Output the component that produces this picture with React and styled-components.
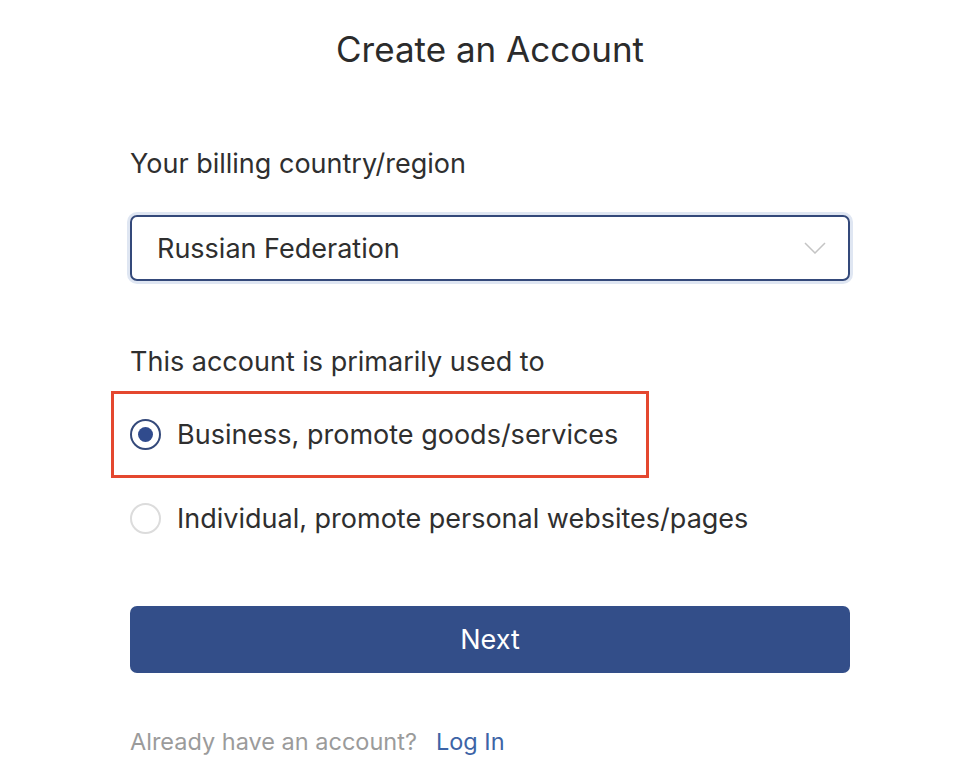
import React from "react";
import styled, { createGlobalStyle } from "styled-components";

const Global = createGlobalStyle`
  html, body { margin: 0; padding: 0; background: #ffffff; }
  body { font-family: Inter, "Noto Sans", sans-serif; color: #2f2f2f; }
  * { box-sizing: border-box; }
`;

const Page = styled.div`
  width: 974px;
  height: 778px;
  padding: 0 124px 0 130px;
  display: flex;
  flex-direction: column;
  overflow: hidden;
`;

const Title = styled.h1`
  margin: 27px 0 0;
  font-size: 35px;
  font-weight: 400;
  line-height: 44px;
  text-align: center;
  color: #2b2b2b;
`;

const Label = styled.div`
  margin-top: ${(p) => p.$top}px;
  font-size: 27px;
  line-height: 30px;
  color: #2f2f2f;
`;

const Select = styled.div`
  margin-top: 36px;
  height: 66px;
  border: 2px solid #34497a;
  border-radius: 7px;
  box-shadow: 0 0 0 3px #dfe6f2;
  display: flex;
  align-items: center;
  justify-content: space-between;
  padding: 0 22px 0 25px;
  font-size: 27px;
  color: #2f2f2f;
`;

const Highlight = styled.div`
  margin: 14px 0 0 -19px;
  width: 538px;
  height: 87px;
  border: 3px solid #e4472f;
  display: flex;
  align-items: center;
  padding-left: 16px;
`;

const Option = styled.label`
  display: flex;
  align-items: center;
  gap: 16px;
  font-size: 27px;
  line-height: 30px;
  color: #2f2f2f;
`;

const PlainOption = styled(Option)`
  margin-top: 25px;
`;

const Radio = styled.span`
  width: 31px;
  height: 31px;
  border-radius: 50%;
  border: ${(p) => (p.$checked ? "2.5px solid #34497a" : "2px solid #dcdcdc")};
  display: flex;
  align-items: center;
  justify-content: center;
  flex-shrink: 0;
  &::after {
    content: "";
    width: 15px;
    height: 15px;
    border-radius: 50%;
    background: #304b8d;
    display: ${(p) => (p.$checked ? "block" : "none")};
  }
`;

const Button = styled.button`
  margin-top: 72px;
  height: 67px;
  border: none;
  border-radius: 7px;
  background: #334e89;
  color: #ffffff;
  font-family: inherit;
  font-size: 27px;
`;

const Footer = styled.div`
  margin-top: 55px;
  font-size: 23.5px;
  line-height: 28px;
  color: #9b9b9b;
  display: flex;
  gap: 19px;
`;

const Link = styled.a`
  color: #3d64a6;
  text-decoration: none;
`;

export default function App() {
  return (
    <>
      <Global />
      <Page>
        <Title>Create an Account</Title>
        <Label $top={78}>Your billing country/region</Label>
        <Select>
          <span>Russian Federation</span>
          <svg width="22" height="12" viewBox="0 0 22 12">
            <path d="M1 1 L11 11 L21 1" fill="none" stroke="#c4c4c4" strokeWidth="1.5" />
          </svg>
        </Select>
        <Label $top={66}>This account is primarily used to</Label>
        <Highlight>
          <Option>
            <Radio $checked />
            Business, promote goods/services
          </Option>
        </Highlight>
        <PlainOption>
          <Radio />
          Individual, promote personal websites/pages
        </PlainOption>
        <Button>Next</Button>
        <Footer>
          <span>Already have an account?</span>
          <Link href="#">Log In</Link>
        </Footer>
      </Page>
    </>
  );
}
